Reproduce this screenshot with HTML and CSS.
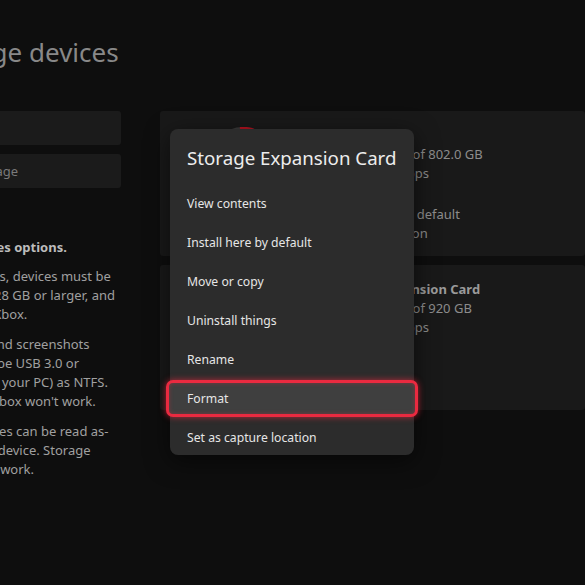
FILE: index.html
```html
<!DOCTYPE html>
<html lang="en">
<head>
  <meta charset="UTF-8" />
  <meta name="viewport" content="width=device-width, initial-scale=1.0"/>
  <title>Storage devices</title>
  <link rel="stylesheet" href="styles.css">
</head>
<body>

  <div class="page">
    <h1 class="title">Manage storage devices</h1>

    <div class="columns">
      <div class="side">
        <div class="side-btn">Clear local games</div>
        <div class="side-btn">Clear persistent storage</div>

        <p class="side-lead">Compare storage devices options.</p>
        <p class="side-text">To install games and apps, devices must be<br>USB 3.1 Gen 1 or later, 128 GB or larger, and<br>formatted by using this Xbox.</p>
        <p class="side-text">To record game videos and screenshots<br>to a USB drive, it should be USB 3.0 or<br>faster and formatted (on your PC) as NTFS.<br>Drives formatted by an Xbox won't work.</p>
        <p class="side-text">Compatible original games can be read as-<br>is from any USB storage device. Storage<br>Expansion Cards will not work.</p>
      </div>

      <div class="drives">
        <div class="drive">
          <svg class="ring" viewBox="0 0 66 66" width="66" height="66">
            <circle cx="33" cy="33" r="31" fill="none" stroke="#3a3a3a" stroke-width="4"/>
            <path d="M30 2 A31 31 0 1 1 6 48" fill="none" stroke="#b3121f" stroke-width="4"/>
          </svg>
          <div class="drive-info">
            <div class="drive-name">Internal</div>
            <div>614.5 GB free of 802.0 GB</div>
            <div>Games and apps</div>
            <div class="drive-extra">Install here by default</div>
            <div>Capture location</div>
          </div>
        </div>
        <div class="drive">
          <svg class="ring" viewBox="0 0 66 66" width="66" height="66">
            <circle cx="33" cy="33" r="31" fill="none" stroke="#3a3a3a" stroke-width="4"/>
            <path d="M33 2 A31 31 0 0 1 60 18" fill="none" stroke="#b3121f" stroke-width="4"/>
          </svg>
          <div class="drive-info">
            <div class="drive-name">Storage Expansion Card</div>
            <div>868.3 GB free of 920 GB</div>
            <div>Games and apps</div>
          </div>
        </div>
      </div>
    </div>
  </div>

  <div class="menu">
    <div class="menu-title">Storage Expansion Card</div>
    <div class="menu-item">View contents</div>
    <div class="menu-item">Install here by default</div>
    <div class="menu-item">Move or copy</div>
    <div class="menu-item">Uninstall things</div>
    <div class="menu-item">Rename</div>
    <div class="menu-item focused">Format</div>
    <div class="menu-item">Set as capture location</div>
  </div>

</body>
</html>
```

FILE: styles.css
```css
body {
  margin: 0;
  padding: 0;
  font-family: 'Noto Sans', 'Open Sans', sans-serif;
  background: #0e0e0e;
  color: #9c9c9c;
  width: 585px;
  height: 585px;
  overflow: hidden;
  position: relative;
}

.page {
  margin-left: -152px;
  padding-top: 35px;
}

.title {
  margin: 0 0 42px -25px;
  font-size: 26px;
  font-weight: normal;
  line-height: 34px;
  color: #888;
  white-space: nowrap;
}

.columns {
  display: flex;
  gap: 39px;
}

.side {
  width: 273px;
  flex-shrink: 0;
}

.side-btn {
  height: 34px;
  margin-bottom: 9px;
  padding: 0 24px;
  background: #1b1b1b;
  border-radius: 3px;
  font-size: 13px;
  line-height: 34px;
  color: #7a7a7a;
  white-space: nowrap;
  overflow: hidden;
}

.side-lead {
  margin: 50px 0 10px;
  font-size: 13px;
  font-weight: bold;
  line-height: 19px;
  color: #bcbcbc;
  white-space: nowrap;
}

.side-text {
  margin: 0 0 11px;
  font-size: 13px;
  line-height: 19px;
  color: #a0a0a0;
  white-space: nowrap;
}

.drives {
  flex: 1;
  display: flex;
  flex-direction: column;
  gap: 9px;
}

.drive {
  height: 145px;
  box-sizing: border-box;
  padding: 16px 0 0 50px;
  background: #191919;
  border-radius: 3px;
  display: flex;
  gap: 51px;
  align-items: flex-start;
}

.ring {
  flex-shrink: 0;
}

.drive-info {
  margin-top: -1.5px;
  font-size: 13px;
  line-height: 19px;
  color: #8c8c8c;
  white-space: nowrap;
}

.drive-name {
  font-weight: bold;
  color: #9a9a9a;
}

.drive-extra {
  margin-top: 22px;
}

.menu {
  position: absolute;
  left: 170px;
  top: 129px;
  width: 244px;
  height: 326px;
  box-sizing: border-box;
  padding-top: 17px;
  background: #2c2c2c;
  border-radius: 8px;
  box-shadow: 0 6px 24px rgba(0,0,0,0.55);
}

.menu-title {
  margin-bottom: 14px;
  padding-left: 17px;
  font-size: 18.7px;
  line-height: 24px;
  color: #ededed;
  white-space: nowrap;
}

.menu-item {
  height: 39px;
  box-sizing: border-box;
  padding-left: 17px;
  font-size: 12.2px;
  line-height: 39px;
  color: #e6e6e6;
  white-space: nowrap;
}

.menu-item.focused {
  height: 37px;
  margin: 1px -4px;
  padding-left: 18px;
  line-height: 31px;
  background: #3f3f3f;
  border: 3px solid #ea2a40;
  border-radius: 7px;
  box-shadow: 0 0 6px rgba(255,40,64,0.65), inset 0 0 4px rgba(255,40,64,0.35);
}
```
